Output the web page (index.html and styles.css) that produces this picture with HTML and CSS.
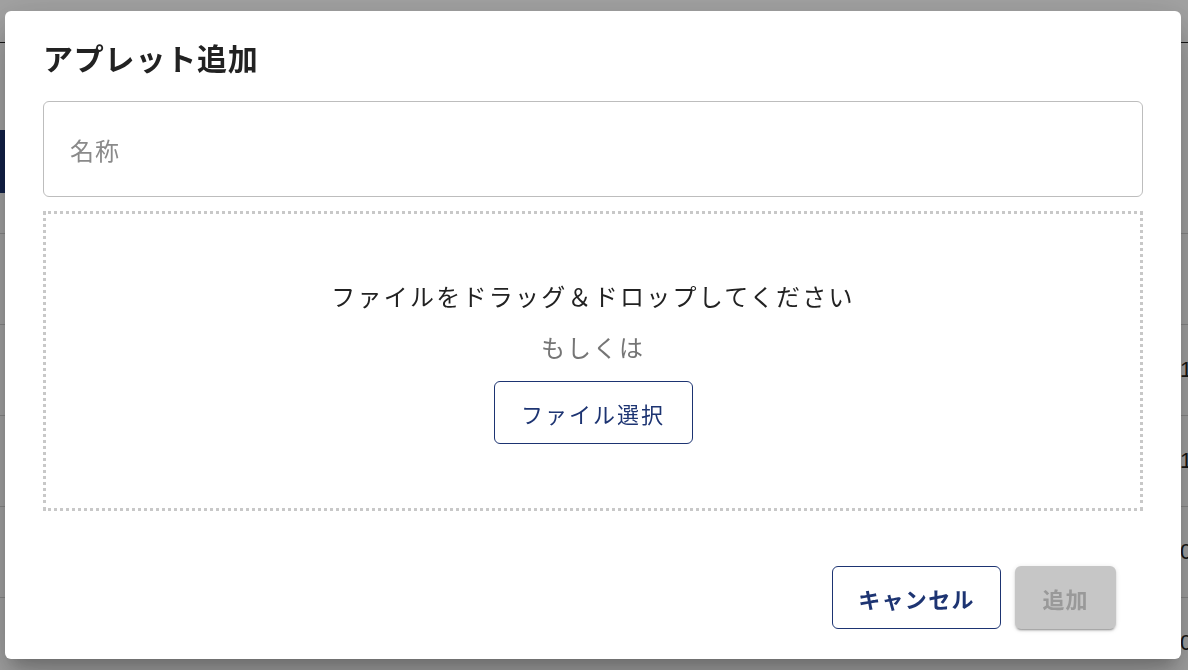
FILE: index.html
```html
<!DOCTYPE html>
<html lang="ja">
<head>
<meta charset="utf-8">
<title>アプレット追加</title>
<link rel="stylesheet" href="styles.css">
</head>
<body>
<div class="page">
  <header class="appbar"></header>
  <div class="toolbar"><button class="navy-btn">新規追加</button></div>
  <div class="table">
    <div class="row head"><span>名称</span></div>
    <div class="row"><span>1</span></div>
    <div class="row"><span>1.</span></div>
    <div class="row"><span>0.</span></div>
    <div class="row"><span>0</span></div>
  </div>
</div>
<div class="backdrop">
  <div class="dialog">
    <h2 class="title">アプレット追加</h2>
    <div class="field">名称</div>
    <div class="drop">
      <p class="drop-text">ファイルをドラッグ＆ドロップしてください</p>
      <p class="or-text">もしくは</p>
      <button class="btn btn-outline btn-file">ファイル選択</button>
    </div>
    <div class="actions">
      <button class="btn btn-outline btn-cancel">キャンセル</button>
      <button class="btn btn-disabled" disabled>追加</button>
    </div>
  </div>
</div>
</body>
</html>
```

FILE: styles.css
```css
* { box-sizing: border-box; }
html, body { margin: 0; padding: 0; }
body {
  width: 1188px;
  height: 670px;
  overflow: hidden;
  font-family: "Noto Sans CJK JP", "Noto Sans", sans-serif;
  background: #fff;
  color: #222;
}
.page { height: 670px; }
.appbar {
  height: 43px;
  border-bottom: 1px solid #222;
}
.toolbar {
  padding-top: 87px;
  height: 190px;
}
.navy-btn {
  height: 63px;
  width: 140px;
  margin-left: -120px;
  background: #1d3472;
  color: #fff;
  border: none;
  border-radius: 4px;
  font-family: inherit;
  font-size: 20px;
  font-weight: 700;
}
.row {
  height: 91px;
  border-top: 1px solid #d6d6d6;
  display: flex;
  align-items: center;
  padding-left: 1180px;
  font-family: "Liberation Sans", sans-serif;
  font-size: 22px;
  color: #222;
  white-space: nowrap;
}
.row.head { color: transparent; }

.backdrop {
  position: fixed;
  inset: 0;
  background: rgba(0, 0, 0, 0.36);
  display: flex;
  align-items: center;
  justify-content: center;
}
.dialog {
  width: 1176px;
  height: 648px;
  margin-left: -2px;
  background: #fff;
  border-radius: 6px;
  box-shadow: 0 11px 15px -7px rgba(0,0,0,.2), 0 24px 38px 3px rgba(0,0,0,.14), 0 9px 46px 8px rgba(0,0,0,.12);
  padding: 0 38px;
  display: flex;
  flex-direction: column;
}
.title {
  margin: 0;
  padding-top: 26px;
  padding-left: 0;
  font-size: 30px;
  line-height: 40px;
  font-weight: 700;
  letter-spacing: 0.8px;
  color: #222;
}
.field {
  margin-top: 24px;
  height: 96px;
  border: 1px solid #bdbdbd;
  border-radius: 6px;
  display: flex;
  align-items: center;
  padding-left: 26px;
  font-size: 24px;
  color: #8a8a8a;
  letter-spacing: 1px;
}
.drop {
  margin-top: 14px;
  height: 300px;
  border: 3px dotted #c8c8c8;
  padding-bottom: 2px;
  display: flex;
  flex-direction: column;
  align-items: center;
  justify-content: center;
}
.drop-text {
  margin: 0;
  font-size: 24px;
  line-height: 40px;
  letter-spacing: 2.25px;
  color: #222;
}
.or-text {
  margin: 11px 0 0;
  font-size: 24px;
  line-height: 40px;
  letter-spacing: 2px;
  color: #757575;
}
.btn {
  font-family: inherit;
  height: 63px;
  border-radius: 6px;
  padding: 0;
  display: flex;
  align-items: center;
  justify-content: center;
}
.btn-outline {
  background: #fff;
  border: 1px solid #1d3472;
  color: #1d3472;
}
.btn-file {
  margin-top: 14px;
  width: 199px;
  font-size: 22px;
  letter-spacing: 2px;
}
.actions {
  margin-top: auto;
  padding-right: 27px;
  padding-bottom: 30px;
  display: flex;
  justify-content: flex-end;
  gap: 14px;
}
.btn-cancel {
  width: 169px;
  font-size: 22px;
  font-weight: 700;
  letter-spacing: 1.3px;
}
.btn-disabled {
  width: 101px;
  border: none;
  background: #c6c6c6;
  color: #999;
  font-size: 22px;
  font-weight: 700;
  letter-spacing: 1px;
  box-shadow: 0 3px 1px -2px rgba(0,0,0,.2), 0 2px 2px 0 rgba(0,0,0,.14), 0 1px 5px 0 rgba(0,0,0,.12);
}
```
